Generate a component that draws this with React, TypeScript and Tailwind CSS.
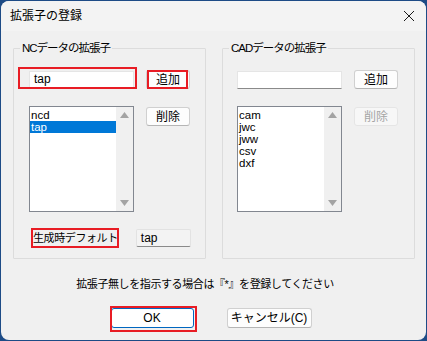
import React from 'react';

const font = "font-['Liberation_Sans','Noto_Sans_CJK_JP',sans-serif]";

function Btn({ label, disabled, primary, className = '' }: { label: string; disabled?: boolean; primary?: boolean; className?: string }) {
  return (
    <div
      className={`flex items-center justify-center rounded-[3px] text-[12px] leading-none ${
        primary
          ? 'border-[1.5px] border-[#0067c0] bg-white text-black'
          : disabled
          ? 'border border-[#e5e5e5] bg-[#f7f7f7] text-[#a5a5a5]'
          : 'border border-[#d0d0d0] border-b-[#b5b5b5] bg-[#fdfdfd] text-black'
      } ${className}`}
    >
      {label}
    </div>
  );
}

function ListBox({ items, selected }: { items: string[]; selected?: string }) {
  return (
    <div className="flex h-[106px] w-[105px] border border-[#828790] bg-white">
      <div className="flex-1 pt-[2px]">
        {items.map((it) => (
          <div
            key={it}
            className={`h-[12px] pl-[1px] text-[11.5px] leading-[12px] ${it === selected ? 'bg-[#0078d7] text-white' : 'text-black'}`}
          >
            {it}
          </div>
        ))}
      </div>
      <div className="flex w-[17px] flex-col items-center justify-between bg-[#f0f0f0] py-[5px]">
        <svg width="9" height="6" viewBox="0 0 9 6"><path d="M4.5 0L9 6H0z" fill="#a3a3a3" /></svg>
        <svg width="9" height="6" viewBox="0 0 9 6"><path d="M0 0h9L4.5 6z" fill="#a3a3a3" /></svg>
      </div>
    </div>
  );
}

function Group({ title, items, selected, focused, children, pad }: { title: string; items: string[]; selected?: string; focused?: boolean; children?: React.ReactNode; pad: string }) {
  return (
    <fieldset className="h-[218px] w-[193px] rounded-[1px] border border-[#dcdcdc] p-0">
      <legend className="ml-[6px] px-[2px] text-[11.5px] leading-[14px] tracking-[-1px] text-black">{title}</legend>
      <div className={pad}>
        <div className="mt-[15px] flex items-center gap-[12px]">
          <div
            className={`flex h-[18px] w-[105px] items-center bg-white pl-[4px] text-[12px] leading-none text-black ${
              focused ? 'border border-[#e5e5e5] border-b-2 border-b-[#0067c0]' : 'border border-[#e5e5e5] border-b-[#8a8a8a]'
            }`}
          >
            {focused ? 'tap' : ''}
          </div>
          <Btn label="追加" className="h-[19px] w-[44px]" />
        </div>
        <div className="mt-[17px] flex items-start gap-[12px]">
          <ListBox items={items} selected={selected} />
          <Btn label="削除" disabled={!selected} className="mt-[1px] h-[19px] w-[44px]" />
        </div>
        {children}
      </div>
    </fieldset>
  );
}

export default function App() {
  return (
    <div className={`relative h-[341px] w-[427px] overflow-hidden bg-[#1d4b86] ${font}`}>
      <div className="ml-[1px] mt-[1px] flex h-[339px] w-[425px] flex-col overflow-hidden rounded-[8px] bg-[#f0f0f0]">
        <div className="flex h-[30px] items-center justify-between bg-[#f3f3f3] pl-[9px] pr-[11px]">
          <span className="text-[12px] leading-none text-black">拡張子の登録</span>
          <svg width="12" height="12" viewBox="0 0 12 12">
            <path d="M1 1L11 11M11 1L1 11" stroke="#1a1a1a" strokeWidth="1" />
          </svg>
        </div>
        <div className="mt-[10px] flex gap-[16px] pl-[12px]">
          <Group title="NCデータの拡張子" items={['ncd', 'tap']} selected="tap" focused pad="pl-[15px]">
            <div className="mt-[17px] flex items-center pl-[4px]">
              <span className="whitespace-nowrap text-[11px] leading-none tracking-[-0.4px] text-black">生成時デフォルト</span>
              <div className="ml-[18px] flex h-[18px] w-[55px] items-center rounded-[2px] border border-[#e2e2e2] border-b-[#8a8a8a] bg-[#f3f3f3] pl-[4px] text-[12px] leading-none text-black">
                tap
              </div>
            </div>
          </Group>
          <Group title="CADデータの拡張子" items={['cam', 'jwc', 'jww', 'csv', 'dxf']} pad="pl-[14px]" />
        </div>
        <div className="mt-[18px] pr-[17px] text-center text-[11px] leading-[14px] tracking-[-0.4px] text-black">
          拡張子無しを指示する場合は『*』を登録してください
        </div>
        <div className="mt-[17px] flex justify-center gap-[33px] pr-[5px]">
          <Btn label="OK" primary className="h-[20px] w-[83px]" />
          <Btn label="キャンセル(C)" className="h-[20px] w-[85px]" />
        </div>
      </div>
      {/* red annotation boxes */}
      <div className="absolute left-[18px] top-[67px] h-[22px] w-[119px] border-2 border-[#e81c24]" />
      <div className="absolute left-[147px] top-[70px] h-[19px] w-[41px] border-2 border-[#e81c24]" />
      <div className="absolute left-[31px] top-[228px] h-[20px] w-[88px] border-2 border-[#e81c24]" />
      <div className="absolute left-[110px] top-[306px] h-[26px] w-[87px] border-2 border-[#e81c24]" />
    </div>
  );
}
